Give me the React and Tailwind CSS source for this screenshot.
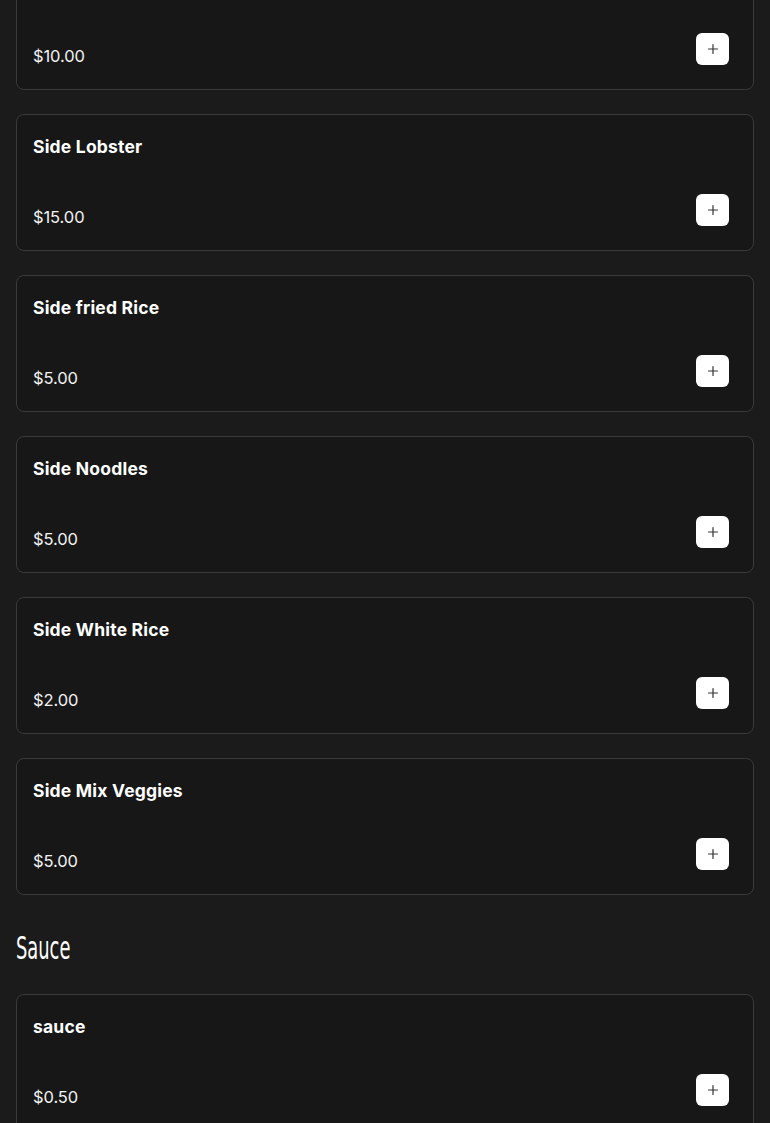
import React from "react";

const sides = [
  { name: "", price: "$10.00" },
  { name: "Side Lobster", price: "$15.00" },
  { name: "Side fried Rice", price: "$5.00" },
  { name: "Side Noodles", price: "$5.00" },
  { name: "Side White Rice", price: "$2.00" },
  { name: "Side Mix Veggies", price: "$5.00" },
];

function Plus() {
  return (
    <svg width="12" height="12" viewBox="0 0 12 12" fill="none">
      <path d="M6 1.5v9M1.5 6h9" stroke="#333" strokeWidth="1.2" strokeLinecap="round" />
    </svg>
  );
}

function Card({ name, price }) {
  return (
    <div className="flex flex-col rounded-lg border border-[#3a3a3a] bg-[#171717] pl-4 pr-6 pt-5 pb-5">
      <div className="h-6 text-[17.5px] leading-6 font-bold text-white tracking-[0.2px]">{name}</div>
      <div className="mt-[35px] flex h-9 items-start justify-between">
        <div className="pt-[10px] text-[16.5px] leading-[26px] text-[#f2f2f2] tracking-[-0.1px]">{price}</div>
        <button className="flex h-8 w-[33px] items-center justify-center rounded-md bg-white">
          <Plus />
        </button>
      </div>
    </div>
  );
}

export default function App() {
  return (
    <div className="min-h-[1123px] overflow-hidden bg-[#1b1b1b] px-4 pb-10" style={{ fontFamily: "Inter, 'Noto Sans', sans-serif" }}>
      <div className="-mt-[47px] flex flex-col gap-6">
        {sides.map((s) => (
          <Card key={s.price + s.name} {...s} />
        ))}
      </div>
      <h2 className="mt-[33px] mb-[26px] h-10 text-[32px] leading-10 font-normal text-white" style={{ fontFamily: "'Liberation Sans Narrow', 'DejaVu Sans Condensed', sans-serif" }}>
        <span className="inline-block origin-left scale-x-[0.62]">Sauce</span>
      </h2>
      <Card name="sauce" price="$0.50" />
    </div>
  );
}
